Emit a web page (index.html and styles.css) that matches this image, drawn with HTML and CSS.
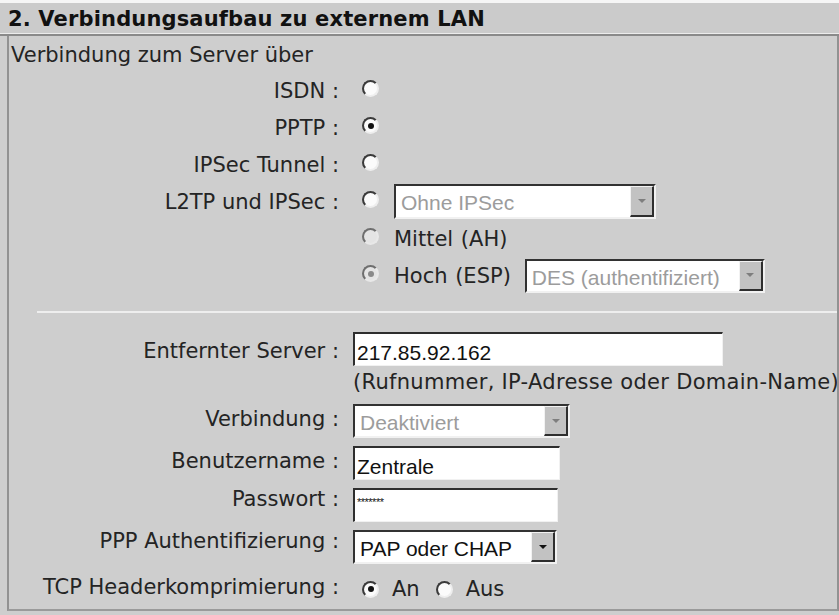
FILE: index.html
```html
<!DOCTYPE html>
<html lang="de">
<head>
<meta charset="utf-8">
<title>Verbindungsaufbau zu externem LAN</title>
<link rel="stylesheet" href="styles.css">
</head>
<body>
<div class="page">
  <h1 class="title">2. Verbindungsaufbau zu externem LAN</h1>
  <div class="box">
    <div class="caption">Verbindung zum Server über</div>
    <div class="form upper">
      <div class="lbl">ISDN :</div>
      <div class="ctl"><span class="radio"></span></div>

      <div class="lbl">PPTP :</div>
      <div class="ctl"><span class="radio checked"></span></div>

      <div class="lbl">IPSec Tunnel :</div>
      <div class="ctl"><span class="radio"></span></div>

      <div class="lbl">L2TP und IPSec :</div>
      <div class="ctl">
        <span class="radio"></span>
        <div class="select disabled sel-ohne"><span class="val">Ohne IPSec</span><span class="arrow"></span></div>
      </div>

      <div class="lbl"></div>
      <div class="ctl"><span class="radio disabled"></span><span class="opt">Mittel (AH)</span></div>

      <div class="lbl"></div>
      <div class="ctl">
        <span class="radio disabled checked"></span><span class="opt">Hoch (ESP)</span>
        <div class="select disabled sel-des"><span class="val">DES (authentifiziert)</span><span class="arrow"></span></div>
      </div>
    </div>

    <div class="sep"></div>

    <div class="form lower">
      <div class="lbl lbl-low">Entfernter Server :</div>
      <div class="ctl"><div class="input in-server">217.85.92.162</div></div>

      <div class="lbl"></div>
      <div class="ctl hint">(Rufnummer, IP-Adresse oder Domain-Name)</div>

      <div class="lbl">Verbindung :</div>
      <div class="ctl"><div class="select disabled sel-verb"><span class="val">Deaktiviert</span><span class="arrow"></span></div></div>

      <div class="lbl">Benutzername :</div>
      <div class="ctl"><div class="input in-user">Zentrale</div></div>

      <div class="lbl lbl-high">Passwort :</div>
      <div class="ctl"><div class="input in-pass"><span class="stars">*******</span></div></div>

      <div class="lbl lbl-high">PPP Authentifizierung :</div>
      <div class="ctl"><div class="select sel-ppp"><span class="val">PAP oder CHAP</span><span class="arrow"></span></div></div>

      <div class="lbl">TCP Headerkomprimierung :</div>
      <div class="ctl tcp">
        <span class="radio checked"></span><span class="opt-an">An</span>
        <span class="radio r-aus"></span><span class="opt-an">Aus</span>
      </div>
    </div>
  </div>
</div>
</body>
</html>
```

FILE: styles.css
```css
html, body {
  margin: 0;
  padding: 0;
}

body {
  width: 839px;
  height: 615px;
  overflow: hidden;
  background: #cecece;
  font-family: "DejaVu Sans", Verdana, sans-serif;
  font-size: 21px;
  color: #242424;
}

.page {
  border-top: 3px solid #f6f6f6;
}

.title {
  margin: 0;
  height: 29px;
  padding: 2px 0 0 8px;
  font-size: 21px;
  font-weight: bold;
  line-height: 29px;
  letter-spacing: 0.15px;
  color: #111;
  background: #cbcbcb;
  box-shadow: inset 0 -1px 0 #ececec;
  border-bottom: 2px solid #8a8a8a;
  white-space: nowrap;
}

.box {
  margin-left: 7px;
  height: 575px;
  box-sizing: border-box;
  padding-top: 7px;
  border-left: 2px solid #929292;
  border-right: 2px solid #929292;
  border-bottom: 2px solid #9a9a9a;
  overflow: hidden;
}

.caption {
  padding-left: 2px;
  line-height: 24px;
  white-space: nowrap;
}

.form {
  display: grid;
  grid-template-columns: 330px auto;
  column-gap: 14px;
}

.upper {
  margin-top: 5px;
  grid-auto-rows: 37px;
  align-items: center;
}

.lbl {
  text-align: right;
  white-space: nowrap;
  line-height: 24px;
}

.ctl {
  display: flex;
  align-items: center;
  white-space: nowrap;
}

/* radio buttons (Windows classic look) */
.radio {
  flex: none;
  display: grid;
  place-items: center;
  width: 13px;
  height: 13px;
  margin: 0 0 4px 9px;
  border: 2.5px solid;
  border-color: #3a3a3a #eeeeee #eeeeee #3a3a3a;
  border-radius: 50%;
  background: #fbfbfb;
}

.radio.checked::after {
  content: "";
  width: 6px;
  height: 6px;
  border-radius: 50%;
  background: #111;
}

.radio.disabled {
  border-color: #6e6e6e #e8e8e8 #e8e8e8 #6e6e6e;
  background: #e4e4e4;
}

.radio.disabled.checked::after {
  background: #8a8a8a;
}

.opt {
  margin-left: 15px;
  line-height: 24px;
  word-spacing: 1px;
}

/* select boxes */
.select {
  flex: none;
  display: flex;
  box-sizing: border-box;
  height: 34px;
  border: 2px solid;
  border-color: #323232 #f1f1f1 #f1f1f1 #323232;
  background: #fff;
  font-family: "Liberation Sans", Arial, sans-serif;
  font-size: 21px;
  color: #111;
}

.select .val {
  flex: 1;
  padding: 5px 0 0 5px;
  line-height: 24px;
  white-space: nowrap;
  overflow: hidden;
}

.select.disabled .val {
  color: #9c9c9c;
}

.select .arrow {
  flex: none;
  display: grid;
  place-items: center;
  width: 24px;
  box-sizing: border-box;
  background: #c2c2c2;
  border-style: solid;
  border-width: 1px 2px 2px 1px;
  border-color: #f2f2f2 #2e2e2e #2e2e2e #f2f2f2;
}

.select .arrow::after {
  content: "";
  border-left: 4px solid transparent;
  border-right: 4px solid transparent;
  border-top: 4px solid #111;
}

.select.disabled .arrow::after {
  border-top-color: #7e7e7e;
}

.sel-ohne {
  width: 262px;
  height: 35px;
  margin-left: 15px;
}

.sel-des {
  width: 240px;
  margin-left: 14px;
}

.sel-verb {
  width: 217px;
}

.sel-ppp {
  width: 204px;
}

/* separator */
.sep {
  height: 2px;
  margin: 17px 0 0 28px;
  background: #eeeeee;
}

/* lower part */
.lower {
  margin-top: 19px;
  grid-template-rows: 34px 22px 34px 34px 34px 34px 34px;
  row-gap: 8px;
}

.lower .lbl {
  align-self: center;
  margin-bottom: 4px;
}

.lower .lbl-low {
  margin-bottom: 0;
  margin-top: 4px;
}

.lower .lbl-high {
  margin-bottom: 12px;
}

.input {
  box-sizing: border-box;
  height: 34px;
  padding: 7px 0 0 2px;
  border-style: solid;
  border-width: 2px 1px 1px 2px;
  border-color: #2e2e2e #f1f1f1 #f1f1f1 #2e2e2e;
  background: #fff;
  font-family: "Liberation Sans", Arial, sans-serif;
  font-size: 21px;
  line-height: 24px;
  color: #111;
  white-space: nowrap;
  overflow: hidden;
}

.in-server {
  width: 370px;
}

.in-user {
  width: 207px;
}

.in-pass {
  width: 205px;
  padding-top: 6px;
}

.stars {
  display: block;
  font-size: 11px;
  line-height: 12px;
  letter-spacing: -0.5px;
}

.hint {
  align-self: start;
  margin-top: -4px;
  line-height: 24px;
  letter-spacing: 0.3px;
}

.tcp .radio {
  margin-bottom: 0;
}

.opt-an {
  margin-left: 13px;
  line-height: 24px;
}

.tcp .r-aus {
  margin-left: 16px;
}
```
